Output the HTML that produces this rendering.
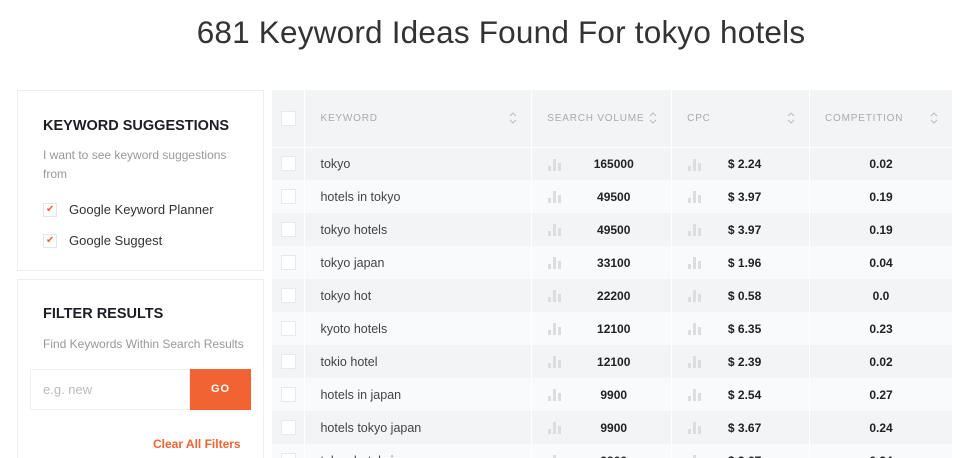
<!DOCTYPE html>
<html><head><meta charset="utf-8"><style>
*{box-sizing:border-box;margin:0;padding:0}
html,body{width:975px;height:458px;overflow:hidden}
body{background:#fff;font-family:"Liberation Sans",sans-serif;position:relative}
h1{position:absolute;top:14px;left:0;width:1002px;text-align:center;font-weight:normal;font-size:31.5px;color:#333;letter-spacing:0.2px}
.card{position:absolute;left:17px;width:247px;border:1px solid #eceef1;background:#fff}
.card h2{position:absolute;left:25px;font-size:14.5px;font-weight:bold;color:#1d1d25;letter-spacing:0}
.sm{position:absolute;left:25px;font-size:12px;color:#999;line-height:19px}
.cb{position:absolute;width:14px;height:14px;border:1px solid #e4e6ea;background:#fff}
.ck{color:#f26334;font-size:10px;position:absolute;left:2px;top:0px}
.lbl{position:absolute;font-size:13px;color:#333}
table{position:absolute;left:272px;top:90px;width:681px;border-collapse:collapse;font-size:12px}
td,th{border-right:1px solid #fff;height:33px;padding:0}
th{height:57px;background:#f3f4f6;font-weight:normal;color:#aaa;font-size:10px;letter-spacing:0.8px;text-align:left;border-bottom:1px solid #fff;position:relative}
tr:nth-child(odd) td{background:#f3f4f6}
tr:nth-child(even) td{background:#f9fafb}
.box{display:block;width:15px;height:15px;background:#fff;border:1px solid #e8e9ec;margin-left:9px}
.kw{padding-left:15px;color:#444;font-size:12.5px}
.num{font-weight:bold;color:#222;text-align:center;position:relative}
.bar{position:absolute;left:16px;top:11px;width:14px;height:12px}
.sort{position:absolute;right:14px;top:21px;width:8px;height:14px}
</style></head><body>
<h1>681 Keyword Ideas Found For tokyo hotels</h1>
<div class="card" style="top:90px;height:181px">
<h2 style="top:27px">KEYWORD SUGGESTIONS</h2>
<div class="sm" style="top:55px">I want to see keyword suggestions<br>from</div>
<div class="cb" style="left:25px;top:112px"><span class="ck">✔</span></div><div class="lbl" style="top:111px;left:51px">Google Keyword Planner</div>
<div class="cb" style="left:25px;top:143px"><span class="ck">✔</span></div><div class="lbl" style="top:142px;left:51px">Google Suggest</div>
</div>
<div class="card" style="top:279px;height:190px">
<h2 style="top:26px">FILTER RESULTS</h2>
<div class="sm" style="top:55px">Find Keywords Within Search Results</div>
<div style="position:absolute;left:12px;top:89px;width:160px;height:41px;border:1px solid #eceef1;font-size:13px;color:#bbb;padding:12px 0 0 12px">e.g. new</div>
<div style="position:absolute;left:172px;top:89px;width:61px;height:41px;background:#f26334;color:#fff;font-weight:bold;font-size:11px;text-align:center;line-height:41px;letter-spacing:1px">GO</div>
<div style="position:absolute;left:135px;top:157px;color:#f26334;font-weight:bold;font-size:12px">Clear All Filters</div>
</div>
<table>
<colgroup><col style="width:33px"><col style="width:227px"><col style="width:140px"><col style="width:138px"><col style="width:143px"></colgroup>
<tr><th><span class="box"></span></th><th style="padding-left:15px">KEYWORD<svg class="sort" viewBox="0 0 8 14"><path d="M1 5L4 2L7 5M1 9L4 12L7 9" fill="none" stroke="#bbb" stroke-width="1"/></svg></th><th style="padding-left:15px">SEARCH VOLUME<svg class="sort" viewBox="0 0 8 14"><path d="M1 5L4 2L7 5M1 9L4 12L7 9" fill="none" stroke="#bbb" stroke-width="1"/></svg></th><th style="padding-left:15px">CPC<svg class="sort" viewBox="0 0 8 14"><path d="M1 5L4 2L7 5M1 9L4 12L7 9" fill="none" stroke="#bbb" stroke-width="1"/></svg></th><th style="padding-left:15px">COMPETITION<svg class="sort" viewBox="0 0 8 14"><path d="M1 5L4 2L7 5M1 9L4 12L7 9" fill="none" stroke="#bbb" stroke-width="1"/></svg></th></tr>
</table>
<script>
var rows=[["tokyo","165000","$ 2.24","0.02"],["hotels in tokyo","49500","$ 3.97","0.19"],["tokyo hotels","49500","$ 3.97","0.19"],["tokyo japan","33100","$ 1.96","0.04"],["tokyo hot","22200","$ 0.58","0.0"],["kyoto hotels","12100","$ 6.35","0.23"],["tokio hotel","12100","$ 2.39","0.02"],["hotels in japan","9900","$ 2.54","0.27"],["hotels tokyo japan","9900","$ 3.67","0.24"],["tokyo hotels japan","9900","$ 3.67","0.24"]];
var bar='<svg class="bar" viewBox="0 0 14 12"><rect x="0" y="7" width="3" height="5" fill="#ddd"/><rect x="5" y="0" width="3" height="12" fill="#ddd"/><rect x="10" y="4" width="3" height="8" fill="#ddd"/></svg>';
var t=document.querySelector('table'),h='';
rows.forEach(function(r){h+='<tr><td><span class="box"></span></td><td class="kw">'+r[0]+'</td><td class="num">'+bar+'<span style="padding-left:24px">'+r[1]+'</span></td><td class="num">'+bar+'<span style="padding-left:8px">'+r[2]+'</span></td><td class="num">'+r[3]+'</td></tr>';});
t.insertAdjacentHTML('beforeend',h);
</script>
</body></html>
